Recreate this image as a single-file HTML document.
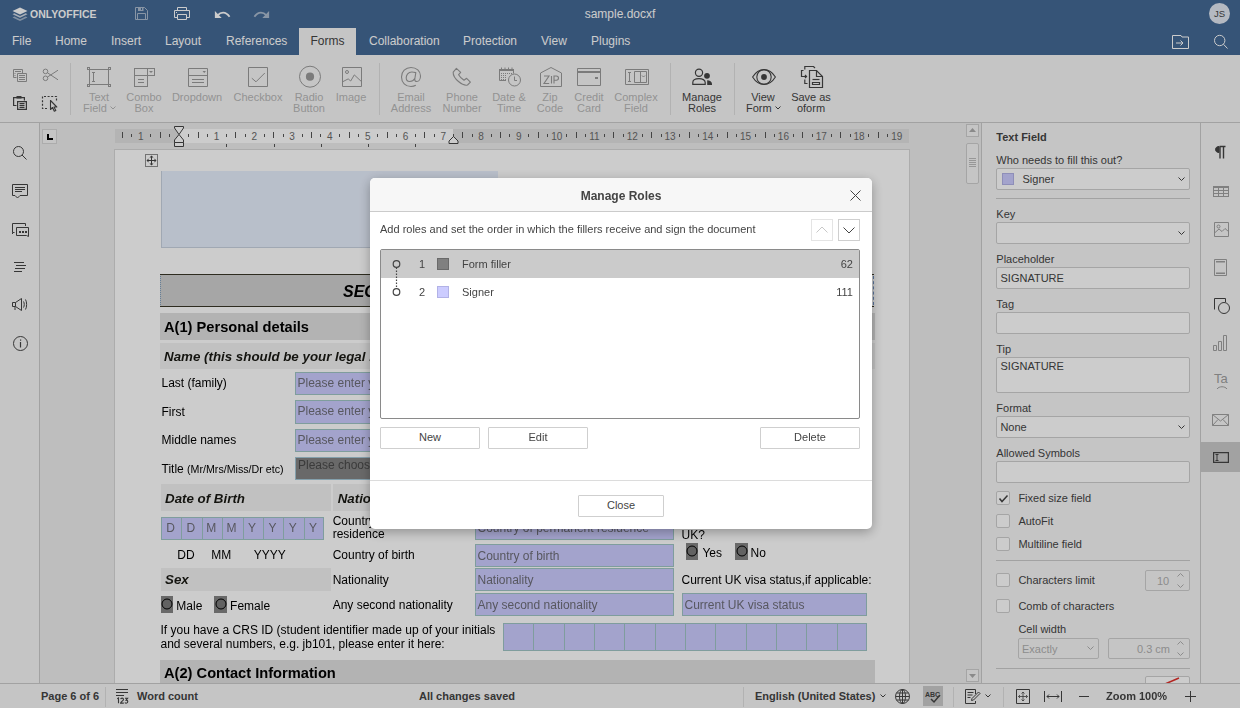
<!DOCTYPE html>
<html><head><meta charset="utf-8">
<style>
*{box-sizing:border-box;margin:0;padding:0}
html,body{width:1240px;height:708px;overflow:hidden;background:#eee;font-family:"Liberation Sans",sans-serif;font-size:11px;color:#444}
.a{position:absolute}
#hdr{left:0;top:0;width:1240px;height:55px;background:#446995;color:#fff}
.tab{position:absolute;top:28px;height:27px;line-height:26px;font-size:12px;color:#fff;white-space:nowrap}
#tb{left:0;top:55px;width:1240px;height:68px;background:#f7f7f7;border-bottom:1px solid #cbcbcb}
.cap{position:absolute;text-align:center;font-size:11px;line-height:11px;white-space:nowrap;color:#b7b7b7}
.cap.en{color:#444}
.sep{position:absolute;top:63px;width:1px;height:52px;background:#dfdfdf}
#lp{left:0;top:123px;width:40px;height:560px;background:#f7f7f7;border-right:1px solid #cbcbcb}
#canvas{left:40px;top:123px;width:941px;height:560px;background:#eeeeee;overflow:hidden}
#rp{left:981px;top:123px;width:219px;height:560px;background:#f7f7f7;border-left:1px solid #cbcbcb;overflow:hidden}
#rb{left:1200px;top:123px;width:40px;height:560px;background:#f7f7f7;border-left:1px solid #cbcbcb}
#sb{left:0;top:683px;width:1240px;height:25px;background:#f7f7f7;border-top:1px solid #cbcbcb}
#mask{left:0;top:0;width:1240px;height:708px;background:rgba(0,0,0,0.2)}
#dlg{left:370px;top:178px;width:502px;height:351px;background:#fff;border-radius:5px;box-shadow:0 3px 12px rgba(0,0,0,0.3);overflow:hidden}
.btn{position:absolute;height:22px;border:1px solid #cfcfcf;border-radius:1px;background:#fff;text-align:center;line-height:19px;font-size:11px;color:#444}
svg{position:absolute;overflow:visible}
.doc{position:absolute;font-size:12px;color:#000;white-space:nowrap;line-height:14px}
.fld{position:absolute;background:#ccccff;border:1px solid #9fc5c5;color:#7f7f7f;font-size:12px;line-height:20px;padding-left:3px;white-space:nowrap;overflow:hidden}
.lbl{position:absolute;font-size:11px;color:#444;white-space:nowrap;line-height:13px}
.inp{position:absolute;border:1px solid #cfcfcf;background:#fff;border-radius:2px}
.chk{position:absolute;width:14px;height:14px;border:1px solid #cfcfcf;background:#fff;border-radius:2px}

</style></head><body>
<div id="hdr" class="a">
<svg style="left:12px;top:7px" width="16" height="15" viewBox="0 0 16 15">
<path d="M8 0.5 L15.5 4 L8 7.5 L0.5 4Z" fill="#fff"/>
<path d="M2.3 6.3 L0.5 7.3 L8 10.8 L15.5 7.3 L13.7 6.3 L8 9 Z" fill="#fff" opacity="0.75"/>
<path d="M2.3 9.6 L0.5 10.6 L8 14.1 L15.5 10.6 L13.7 9.6 L8 12.3 Z" fill="#fff" opacity="0.5"/>
</svg>
<div class="a" style="left:30px;top:6px;font-size:11.5px;font-weight:bold;color:#fff;line-height:16px;transform:scaleX(0.91);transform-origin:0 0">ONLYOFFICE</div>
<!-- save -->
<svg style="left:135px;top:7px" width="13" height="13" viewBox="0 0 13 13" opacity="0.55"><path d="M0.5 0.5H9.5L12.5 3.5V12.5H0.5Z M2.5 12.5V6.5H10.5V12.5" fill="none" stroke="#fff"/><path fill-rule="evenodd" d="M3 0H8.5V4H3Z M6 1H7V3H6Z" fill="#fff"/></svg>
<!-- print -->
<svg style="left:174px;top:7px" width="16" height="13" viewBox="0 0 16 13"><path d="M3.5 3V0.5H12.5V3 M3 10.5H0.5V3.5H15.5V10.5H13 M3.5 7.5H12.5V12.5H3.5Z" fill="none" stroke="#fff"/><rect x="2" y="5" width="1" height="1" fill="#fff"/></svg>
<!-- undo -->
<svg style="left:214px;top:10px" width="17" height="9" viewBox="0 0 17 9"><path d="M0.9 1V8.1H7.7Z" fill="#fff"/><path d="M3.8 5.2C6.5 2 11.5 0.8 15.6 6.7" fill="none" stroke="#fff" stroke-width="1.8"/></svg>
<!-- redo -->
<svg style="left:254px;top:10px" width="17" height="9" viewBox="0 0 17 9" opacity="0.55"><path d="M15.1 1V8.1H8.3Z" fill="#fff"/><path d="M12.2 5.2C9.5 2 4.5 0.8 0.4 6.7" fill="none" stroke="#fff" stroke-width="1.8"/></svg>
<div class="a" style="left:560px;top:6px;width:120px;text-align:center;font-size:12px;line-height:16px;color:#fff">sample.docxf</div>
<div class="a" style="left:1209px;top:3px;width:21px;height:21px;border-radius:50%;background:#e2e8f2;color:#444;font-size:9.5px;line-height:21px;text-align:center">JS</div>
<div class="tab" style="left:12px">File</div>
<div class="tab" style="left:55px">Home</div>
<div class="tab" style="left:111px">Insert</div>
<div class="tab" style="left:165px">Layout</div>
<div class="tab" style="left:226px">References</div>
<div class="tab" style="left:299px;width:57px;background:#f7f7f7;color:#444;text-align:center;top:28px">Forms</div>
<div class="tab" style="left:369px">Collaboration</div>
<div class="tab" style="left:463px">Protection</div>
<div class="tab" style="left:541px">View</div>
<div class="tab" style="left:591px">Plugins</div>
<svg style="left:1172px;top:35px" width="17" height="14" viewBox="0 0 17 14"><path d="M0.5 13.5V0.5H9L10 2H16.5V13.5Z M4 8H11 M8.5 5.5L11 8L8.5 10.5" fill="none" stroke="#fff"/></svg>
<svg style="left:1214px;top:35px" width="15" height="15" viewBox="0 0 15 15"><circle cx="5.7" cy="5.5" r="5.2" fill="none" stroke="#fff"/><path d="M9.5 9.3L13.5 13.5" stroke="#fff"/></svg>
</div>
<div id="tb" class="a"></div>
<div class="a" id="tbc" style="left:0;top:0">
<!-- copy -->
<svg style="left:13px;top:69px" width="15" height="14" viewBox="0 0 15 14"><g stroke="#9a9a9a" fill="none"><path d="M3.5 8.5H0.5V0.5H9.5V4"/><path d="M2 2.5H8"/><path d="M4.5 4.5H13.5V12.5H4.5Z M6 6.5H12 M6 8.5H12 M6 10.5H12"/></g><rect x="1.5" y="4" width="1" height="1" fill="#9a9a9a"/><rect x="1.5" y="6" width="1" height="1" fill="#9a9a9a"/></svg>
<!-- cut -->
<svg style="left:42px;top:68px" width="17" height="14" viewBox="0 0 17 14"><g stroke="#9a9a9a" fill="none"><circle cx="3.5" cy="3.4" r="2.3"/><circle cx="3.5" cy="10.3" r="2.3"/><path d="M5.5 4.8L16 11.8 M5.5 9L16 2.2"/></g></svg>
<!-- paste -->
<svg style="left:13px;top:96px" width="15" height="15" viewBox="0 0 15 15"><g stroke="#444" fill="none" stroke-width="1.2"><path d="M3.5 9.5H0.6V1.6H11.4V4.5"/><path d="M4.6 5.6H13.4V13.4H4.6Z M6.5 7.6H11.5 M6.5 9.5H11.5 M6.5 11.4H11.5"/></g><rect x="3.5" y="0" width="5" height="2.5" fill="#444"/></svg>
<!-- select all -->
<svg style="left:42px;top:96px" width="16" height="16" viewBox="0 0 16 16"><path d="M5 12.5H0.5V0.5H14.5V6" stroke="#444" fill="none" stroke-width="1.2" stroke-dasharray="2 1.6"/><path d="M8.5 4.5V13.5L10.5 11.5L12.3 15.3L13.8 14.6L12 11H14.8Z" stroke="#444" fill="none" stroke-width="1.1" stroke-linejoin="round"/></svg>
<div class="sep" style="left:70px"></div>
<!-- text field -->
<svg style="left:87px;top:67px" width="24" height="20" viewBox="0 0 24 20"><g stroke="#9a9a9a" fill="none"><path d="M2.5 3V17 M21.5 3V17 M3 2.5H21 M3 17.5H21"/><rect x="0.5" y="0.5" width="2" height="2"/><rect x="21.5" y="0.5" width="2" height="2"/><rect x="0.5" y="17.5" width="2" height="2"/><rect x="21.5" y="17.5" width="2" height="2"/><path d="M6.5 5.5V14.5 M5 5.5H8 M5 14.5H8"/></g></svg>
<!-- combo box -->
<svg style="left:134px;top:68px" width="21" height="19" viewBox="0 0 21 19"><path d="M0.5 0.5H13.5V18.5H0.5Z M0.5 7.5H20.5V0.5H13.5 M4 11.5H10 M4 14.5H10" stroke="#9a9a9a" fill="none" shape-rendering="crispEdges"/><path d="M15 3H19L17 5Z" fill="#9a9a9a"/></svg>
<!-- dropdown -->
<svg style="left:188px;top:68px" width="20" height="19" viewBox="0 0 20 19"><path d="M0.5 0.5H19.5V18.5H0.5Z M0.5 7.5H19.5 M4 11.5H16 M4 14.5H16" stroke="#9a9a9a" fill="none"/><path d="M14.5 3H18L16.25 5Z" fill="#9a9a9a"/></svg>
<!-- checkbox -->
<svg style="left:248px;top:67px" width="20" height="20" viewBox="0 0 20 20"><path d="M0.5 0.5H19.5V19.5H0.5Z" stroke="#9a9a9a" fill="none"/><path d="M3.8 11.2L8 14.8L16.8 6" stroke="#9a9a9a" fill="none"/></svg>
<!-- radio -->
<svg style="left:299px;top:66px" width="22" height="22" viewBox="0 0 22 22"><circle cx="11" cy="10.7" r="10.5" stroke="#9a9a9a" fill="none"/><circle cx="11" cy="10.7" r="4.1" fill="#9a9a9a"/></svg>
<!-- image -->
<svg style="left:342px;top:67px" width="20" height="20" viewBox="0 0 20 20"><path d="M0.5 0.5H19.5V19.5H0.5Z" stroke="#9a9a9a" fill="none"/><circle cx="5" cy="5" r="1.5" stroke="#9a9a9a" fill="none"/><path d="M0.6 14.8L6.2 11.9L8.7 14L12.3 7.9L19.7 14.8" stroke="#9a9a9a" fill="none"/></svg>
<div class="sep" style="left:379px"></div>
<!-- email -->
<svg style="left:401px;top:67px" width="21" height="20" viewBox="0 0 21 20"><path d="M14.8 18.3C13.5 19.1 11.8 19.5 10 19.5C4.5 19.5 0.5 15.5 0.5 10C0.5 4.5 4.5 0.5 10 0.5C15.5 0.5 19.5 4.2 19.5 9C19.5 12.3 17.8 14.5 15.8 14.5C14.3 14.5 13.6 13.5 13.8 12L14.8 5.6C13.5 5.2 12 5 10.8 5C7.2 5 5.2 8 5.2 10.8C5.2 13 6.6 14.5 8.6 14.5C10.8 14.5 13 13 13.8 11.6" stroke="#9a9a9a" stroke-width="1.1" fill="none" stroke-linejoin="round"/></svg>
<!-- phone -->
<svg style="left:450px;top:66px" width="24" height="22" viewBox="0 0 24 22"><path d="M6.4 2.4L10.7 6.3L8.6 8.7C9.8 10.8 11.8 12.8 14 14.2L16.6 12.3L20.4 16.1L17.5 19C15.5 19.6 12 18.4 8.5 15.5C5 12.5 3 9 3.2 6.2Z" stroke="#9a9a9a" stroke-width="1.1" stroke-linejoin="round" fill="none"/></svg>
<!-- date -->
<svg style="left:498px;top:67px" width="24" height="21" viewBox="0 0 24 21"><path d="M1.5 13.5V2.5H15.5V6.5 M1.5 13.5H8" stroke="#9a9a9a" fill="none"/><rect x="1" y="2" width="15" height="2" fill="#9a9a9a"/><path d="M3.5 0.5V3 M7 0.5V3 M10.5 0.5V3 M14 0.5V3" stroke="#9a9a9a"/><path d="M3 6h1v1h-1zM5 6h1v1h-1zM7 6h1v1h-1zM9 6h1v1h-1zM11 6h1v1h-1zM13 6h1v1h-1zM3 8h1v1h-1zM5 8h1v1h-1zM7 8h1v1h-1zM3 10h1v1h-1zM5 10h1v1h-1zM7 10h1v1h-1zM3 12h1v1h-1zM5 12h1v1h-1zM7 12h1v1h-1z" fill="#9a9a9a"/><circle cx="16.5" cy="13" r="6" stroke="#9a9a9a" fill="#f7f7f7"/><path d="M16.5 9.5V13.5H19" stroke="#9a9a9a" fill="none"/></svg>
<!-- zip -->
<svg style="left:540px;top:67px" width="22" height="20" viewBox="0 0 22 20"><path d="M0.5 19.5V6L11 0.5L21.5 6V19.5Z" stroke="#9a9a9a" fill="none"/><path d="M4 9H9L4 16.5H9.2 M11.5 9V16.5 M14 16.5V9H16.3C17.8 9 18.5 10 18.5 11.1C18.5 12.2 17.8 13.2 16.3 13.2H14" stroke="#9a9a9a" stroke-width="1.1" fill="none"/></svg>
<!-- credit card -->
<svg style="left:577px;top:68px" width="24" height="18" viewBox="0 0 24 18"><path d="M0.5 0.5H23.5V17.5H0.5Z" stroke="#9a9a9a" fill="none"/><rect x="1" y="3" width="22" height="2" fill="#9a9a9a"/><rect x="18" y="9" width="3" height="2" fill="#9a9a9a"/></svg>
<!-- complex field -->
<svg style="left:625px;top:69px" width="24" height="16" viewBox="0 0 24 16"><path d="M0.5 0.5H23.5V15.5H0.5Z M9.5 2.5V13.5H21.5V2.5Z M15.5 2.5V13.5 M3 3.5H6 M3 12.5H6 M4.5 3.5V12.5" stroke="#9a9a9a" fill="none"/><path d="M17 6.5L18.5 8L20 6.5" stroke="#9a9a9a" fill="none"/></svg>
<div class="sep" style="left:670px"></div>
<!-- manage roles -->
<svg style="left:690px;top:67px" width="23" height="19" viewBox="0 0 23 19"><circle cx="9" cy="5.8" r="3.6" stroke="#444" stroke-width="1.2" fill="none"/><path d="M2.8 17.4V15.5C2.8 13 5.5 11.6 9 11.6C12.5 11.6 15.2 13 15.2 15.5V17.4Z" stroke="#444" stroke-width="1.2" fill="none"/><circle cx="17" cy="8.8" r="2.9" fill="#444"/><path d="M17.2 18V13.2C19.7 13.2 22 14.5 22 17V18Z" fill="#444"/></svg>
<div class="sep" style="left:734px"></div>
<!-- view form -->
<svg style="left:752px;top:69px" width="24" height="16" viewBox="0 0 24 16"><path d="M0.6 8C4 2.5 8 0.6 12 0.6C16 0.6 20 2.5 23.4 8C20 13.5 16 15.4 12 15.4C8 15.4 4 13.5 0.6 8Z" stroke="#444" stroke-width="1.1" fill="none"/><circle cx="12" cy="8" r="7.2" stroke="#444" stroke-width="1.1" fill="none"/><circle cx="12" cy="8" r="2.9" fill="#444"/></svg>
<!-- save as oform -->
<svg style="left:800px;top:65px" width="24" height="24" viewBox="0 0 24 24"><g stroke="#444" stroke-width="1.2" fill="none"><path d="M4.8 4.5V1.5H13.5L15 3"/><path d="M3.5 5.5H1.5V11.5H6.5"/><path d="M5 10L6.5 11.5L5 13"/><path d="M4.8 14.5V18.5H7.5"/><path d="M9.5 5.5H16.5L22.5 11.5V22.5H9.5Z"/><path d="M16.5 5.5V11.5H22.5"/><path d="M12.5 14.5H19.5"/><path d="M12.5 17.5H19.5V19.5H12.5Z"/></g></svg>
<div class="cap" style="left:59px;width:80px;top:92px">Text</div><div class="cap" style="left:83px;top:103px">Field</div><svg style="left:110px;top:106px" width="6" height="4" viewBox="0 0 6 4"><path d="M0.5 0.5L3 3L5.5 0.5" stroke="#b7b7b7" fill="none"/></svg><div class="cap" style="left:104px;width:80px;top:92px">Combo</div><div class="cap" style="left:104px;width:80px;top:103px">Box</div><div class="cap" style="left:157px;width:80px;top:92px">Dropdown</div><div class="cap" style="left:218px;width:80px;top:92px">Checkbox</div><div class="cap" style="left:269px;width:80px;top:92px">Radio</div><div class="cap" style="left:269px;width:80px;top:103px">Button</div><div class="cap" style="left:311px;width:80px;top:92px">Image</div><div class="cap" style="left:371px;width:80px;top:92px">Email</div><div class="cap" style="left:371px;width:80px;top:103px">Address</div><div class="cap" style="left:422px;width:80px;top:92px">Phone</div><div class="cap" style="left:422px;width:80px;top:103px">Number</div><div class="cap" style="left:469px;width:80px;top:92px">Date &amp;</div><div class="cap" style="left:469px;width:80px;top:103px">Time</div><div class="cap" style="left:510px;width:80px;top:92px">Zip</div><div class="cap" style="left:510px;width:80px;top:103px">Code</div><div class="cap" style="left:549px;width:80px;top:92px">Credit</div><div class="cap" style="left:549px;width:80px;top:103px">Card</div><div class="cap" style="left:596px;width:80px;top:92px">Complex</div><div class="cap" style="left:596px;width:80px;top:103px">Field</div><div class="cap en" style="left:662px;width:80px;top:92px">Manage</div><div class="cap en" style="left:662px;width:80px;top:103px">Roles</div><div class="cap en" style="left:723px;width:80px;top:92px">View</div><div class="cap en" style="left:746px;top:103px">Form</div><svg style="left:775px;top:106px" width="6" height="4" viewBox="0 0 6 4"><path d="M0.5 0.5L3 3L5.5 0.5" stroke="#444" fill="none"/></svg><div class="cap en" style="left:771px;width:80px;top:92px">Save as</div><div class="cap en" style="left:771px;width:80px;top:103px">oform</div></div>
<div id="lp" class="a"></div>
<svg style="left:13px;top:146px" width="15" height="15" viewBox="0 0 15 15"><circle cx="5.5" cy="5.5" r="5" fill="none" stroke="#444"/><path d="M9 9L13.5 13.5" stroke="#444"/></svg>
<svg style="left:12px;top:184px" width="17" height="15" viewBox="0 0 17 15"><path d="M0.5 0.5H15.5V11.5H8L5.5 14L3 11.5H0.5Z" fill="none" stroke="#444"/><path d="M3 3.5H13 M3 5.5H13 M3 7.5H10" stroke="#444"/></svg>
<svg style="left:12px;top:223px" width="17" height="15" viewBox="0 0 17 15"><path d="M2.5 9.5H0.5V0.5H13.5V3" fill="none" stroke="#444"/><path d="M0.5 9.5V11" stroke="#444"/><path d="M4.5 4.5H16.5V13.5L14.5 12.5H4.5Z" fill="none" stroke="#444"/><path d="M7 8h2v2h-2zM10 8h2v2h-2zM13 8h2v2h-2z" fill="#444"/></svg>
<svg style="left:13px;top:261px" width="14" height="12" viewBox="0 0 14 12"><path d="M1 1.5H11 M3 4.5H13 M2 7.5H12 M1 10.5H9" stroke="#444"/></svg>
<svg style="left:12px;top:298px" width="16" height="13" viewBox="0 0 16 13"><path d="M0.5 4.5H3.5L9.5 0.5V12.5L3.5 8.5H0.5Z M3.5 4.5V8.5 M3 8.5V12" fill="none" stroke="#444"/><path d="M11.5 3.5C12.5 5 12.5 8 11.5 9.5 M13.5 1.5C15 4 15 9 13.5 11.5" fill="none" stroke="#444"/></svg>
<svg style="left:13px;top:336px" width="15" height="15" viewBox="0 0 15 15"><circle cx="7.5" cy="7.5" r="7" fill="none" stroke="#444"/><path d="M7.5 6V11.5" stroke="#444" stroke-width="1.2"/><rect x="7" y="3.5" width="1.2" height="1.2" fill="#444"/></svg>
<div id="canvas" class="a"></div>
<div class="a" style="left:42px;top:129px;width:15px;height:15px;border:1px solid #d8d8d8;background:#f7f7f7"></div>
<svg style="left:47px;top:134px" width="6" height="6" viewBox="0 0 6 6"><path d="M0 0H2V4H6V6H0Z" fill="#000"/></svg>
<div class="a" style="left:115px;top:129px;width:794px;height:14px;background:#e2e2e2"></div>
<div class="a" style="left:179px;top:129px;width:274px;height:14px;background:#ffffff"></div>
<svg style="left:0;top:0" width="1240" height="200" viewBox="0 0 1240 200"><path d="M122.5 132V138" stroke="#555"/><path d="M131.5 134V137" stroke="#555"/><text x="140.9" y="140" text-anchor="middle" font-family="Liberation Sans" font-size="10" fill="#6a6a6a">1</text><path d="M150.5 134V137" stroke="#555"/><path d="M160.5 132V138" stroke="#555"/><path d="M169.5 134V137" stroke="#555"/><path d="M188.5 134V137" stroke="#555"/><path d="M198.5 132V138" stroke="#555"/><path d="M207.5 134V137" stroke="#555"/><text x="216.5" y="140" text-anchor="middle" font-family="Liberation Sans" font-size="10" fill="#6a6a6a">1</text><path d="M226.5 134V137" stroke="#555"/><path d="M235.5 132V138" stroke="#555"/><path d="M245.5 134V137" stroke="#555"/><text x="254.3" y="140" text-anchor="middle" font-family="Liberation Sans" font-size="10" fill="#6a6a6a">2</text><path d="M264.5 134V137" stroke="#555"/><path d="M273.5 132V138" stroke="#555"/><path d="M283.5 134V137" stroke="#555"/><text x="292.1" y="140" text-anchor="middle" font-family="Liberation Sans" font-size="10" fill="#6a6a6a">3</text><path d="M302.5 134V137" stroke="#555"/><path d="M311.5 132V138" stroke="#555"/><path d="M320.5 134V137" stroke="#555"/><text x="329.9" y="140" text-anchor="middle" font-family="Liberation Sans" font-size="10" fill="#6a6a6a">4</text><path d="M339.5 134V137" stroke="#555"/><path d="M349.5 132V138" stroke="#555"/><path d="M358.5 134V137" stroke="#555"/><text x="367.7" y="140" text-anchor="middle" font-family="Liberation Sans" font-size="10" fill="#6a6a6a">5</text><path d="M377.5 134V137" stroke="#555"/><path d="M387.5 132V138" stroke="#555"/><path d="M396.5 134V137" stroke="#555"/><text x="405.5" y="140" text-anchor="middle" font-family="Liberation Sans" font-size="10" fill="#6a6a6a">6</text><path d="M415.5 134V137" stroke="#555"/><path d="M424.5 132V138" stroke="#555"/><path d="M434.5 134V137" stroke="#555"/><text x="443.3" y="140" text-anchor="middle" font-family="Liberation Sans" font-size="10" fill="#6a6a6a">7</text><path d="M453.5 134V137" stroke="#555"/><path d="M462.5 132V138" stroke="#555"/><path d="M472.5 134V137" stroke="#555"/><text x="481.1" y="140" text-anchor="middle" font-family="Liberation Sans" font-size="10" fill="#6a6a6a">8</text><path d="M491.5 134V137" stroke="#555"/><path d="M500.5 132V138" stroke="#555"/><path d="M509.5 134V137" stroke="#555"/><text x="518.9" y="140" text-anchor="middle" font-family="Liberation Sans" font-size="10" fill="#6a6a6a">9</text><path d="M528.5 134V137" stroke="#555"/><path d="M538.5 132V138" stroke="#555"/><path d="M547.5 134V137" stroke="#555"/><text x="556.7" y="140" text-anchor="middle" font-family="Liberation Sans" font-size="10" fill="#6a6a6a">10</text><path d="M566.5 134V137" stroke="#555"/><path d="M576.5 132V138" stroke="#555"/><path d="M585.5 134V137" stroke="#555"/><text x="594.4" y="140" text-anchor="middle" font-family="Liberation Sans" font-size="10" fill="#6a6a6a">11</text><path d="M604.5 134V137" stroke="#555"/><path d="M613.5 132V138" stroke="#555"/><path d="M623.5 134V137" stroke="#555"/><text x="632.2" y="140" text-anchor="middle" font-family="Liberation Sans" font-size="10" fill="#6a6a6a">12</text><path d="M642.5 134V137" stroke="#555"/><path d="M651.5 132V138" stroke="#555"/><path d="M661.5 134V137" stroke="#555"/><text x="670.0" y="140" text-anchor="middle" font-family="Liberation Sans" font-size="10" fill="#6a6a6a">13</text><path d="M679.5 134V137" stroke="#555"/><path d="M689.5 132V138" stroke="#555"/><path d="M698.5 134V137" stroke="#555"/><text x="707.8" y="140" text-anchor="middle" font-family="Liberation Sans" font-size="10" fill="#6a6a6a">14</text><path d="M717.5 134V137" stroke="#555"/><path d="M727.5 132V138" stroke="#555"/><path d="M736.5 134V137" stroke="#555"/><text x="745.6" y="140" text-anchor="middle" font-family="Liberation Sans" font-size="10" fill="#6a6a6a">15</text><path d="M755.5 134V137" stroke="#555"/><path d="M765.5 132V138" stroke="#555"/><path d="M774.5 134V137" stroke="#555"/><text x="783.4" y="140" text-anchor="middle" font-family="Liberation Sans" font-size="10" fill="#6a6a6a">16</text><path d="M793.5 134V137" stroke="#555"/><path d="M802.5 132V138" stroke="#555"/><path d="M812.5 134V137" stroke="#555"/><text x="821.2" y="140" text-anchor="middle" font-family="Liberation Sans" font-size="10" fill="#6a6a6a">17</text><path d="M831.5 134V137" stroke="#555"/><path d="M840.5 132V138" stroke="#555"/><path d="M850.5 134V137" stroke="#555"/><text x="859.0" y="140" text-anchor="middle" font-family="Liberation Sans" font-size="10" fill="#6a6a6a">18</text><path d="M868.5 134V137" stroke="#555"/><path d="M878.5 132V138" stroke="#555"/><path d="M887.5 134V137" stroke="#555"/><text x="896.8" y="140" text-anchor="middle" font-family="Liberation Sans" font-size="10" fill="#6a6a6a">19</text><path d="M226.5 144V147" stroke="#555"/><path d="M274.5 144V147" stroke="#555"/><path d="M321.5 144V147" stroke="#555"/><path d="M368.5 144V147" stroke="#555"/><path d="M415.5 144V147" stroke="#555"/></svg>
<div class="a" style="left:114px;top:149px;width:796px;height:560px;background:#fff;border-left:1px solid #d8d8d8;border-right:1px solid #d8d8d8;border-top:1px solid #d8d8d8"></div>
<svg style="left:174px;top:126px" width="11" height="22" viewBox="0 0 11 22"><path d="M0.5 0.5H9.5V2L5 8.5L0.5 2Z" fill="#fff" stroke="#444"/><path d="M5 8.5L9.5 14V16.5H0.5V14Z" fill="#fff" stroke="#444"/><path d="M0.5 16.5H9.5V20.5H0.5Z" fill="#fff" stroke="#444"/></svg>
<svg style="left:448px;top:136px" width="11" height="8" viewBox="0 0 11 8"><path d="M5.5 0.5L10 5V7.5H1V5Z" fill="#fff" stroke="#444"/></svg>
<div class="a" style="left:966px;top:124px;width:13px;height:13px;border:1px solid #cfcfcf;background:#f7f7f7"></div>
<svg style="left:969px;top:128px" width="7" height="4" viewBox="0 0 7 4"><path d="M0 4L3.5 0L7 4Z" fill="#adadad"/></svg>
<div class="a" style="left:966px;top:143px;width:13px;height:41px;border:1px solid #cfcfcf;background:#f7f7f7;border-radius:2px"></div>
<svg style="left:969px;top:158px" width="7" height="10" viewBox="0 0 7 10"><path d="M0 0.5H7M0 2.5H7M0 4.5H7M0 6.5H7M0 8.5H7" stroke="#bdbdbd"/></svg>
<div class="a" style="left:966px;top:669px;width:13px;height:13px;border:1px solid #cfcfcf;background:#f7f7f7"></div>
<svg style="left:969px;top:674px" width="7" height="4" viewBox="0 0 7 4"><path d="M0 0L3.5 4L7 0Z" fill="#adadad"/></svg>
<div class="a" style="left:145px;top:154px;width:13px;height:13px;border:1px solid #8f8f8f;background:#fff"></div>
<svg style="left:146px;top:155px" width="11" height="11" viewBox="0 0 11 11"><path d="M5.5 1.5V9.5 M1.5 5.5H9.5" stroke="#444"/><path d="M5.5 0.5L7.5 2.5H3.5Z M5.5 10.5L7.5 8.5H3.5Z M0.5 5.5L2.5 3.5V7.5Z M10.5 5.5L8.5 3.5V7.5Z" fill="#444"/></svg>
<!--DOC-->
<div id="docwrap" class="a" style="left:0;top:0;width:1240px;height:708px;will-change:transform"><div class="a" style="left:161px;top:171px;width:337px;height:77px;background:#e7effd;border-left:1px solid #c9d2e0;border-bottom:1px solid #c9d2e0"></div>
<div class="a" style="left:160px;top:274px;width:714px;height:33px;background:#d0d0d0;border-top:1px solid #3a3828;border-bottom:1px solid #3a3828"></div>
<div class="a" style="left:872px;top:275px;width:2px;height:31px;background:#f7f7f7"></div>
<div class="a" style="left:873px;top:276px;width:0;height:29px;border-left:1px dashed #6f8fbf"></div>
<div class="a" style="left:160px;top:276px;width:0;height:29px;border-left:1px dotted #7f9fbf"></div>
<div class="doc" style="left:343px;top:282.51px;font-size:16px;line-height:18.4px;color:#000;font-weight:bold;font-style:italic">SECTION A: PERSONAL INFORMATION</div>
<div class="a" style="left:160px;top:313px;width:715px;height:27px;background:#e0e0e0"></div>
<div class="doc" style="left:164px;top:318.72px;font-size:14.67px;line-height:16.87px;color:#000;font-weight:bold">A(1) Personal details</div>
<div class="a" style="left:160px;top:343px;width:715px;height:26px;background:#f2f2f2"></div>
<div class="doc" style="left:164px;top:348.93px;font-size:13.33px;line-height:15.33px;color:#000;font-weight:bold;font-style:italic;color:#1a1a14">Name (this should be your legal name)</div>
<div class="doc" style="left:161.5px;top:376.63px;font-size:12px;line-height:13.8px;color:#000;">Last (family)</div>
<div class="doc" style="left:161.5px;top:405.73px;font-size:12px;line-height:13.8px;color:#000;">First</div>
<div class="doc" style="left:161.5px;top:433.93px;font-size:12px;line-height:13.8px;color:#000;">Middle names</div>
<div class="doc" style="left:161.5px;top:462.3px;font-size:12px;line-height:14px">Title <span style="font-size:10.67px">(Mr/Mrs/Miss/Dr etc)</span></div>
<div class="a" style="left:295px;top:372px;width:567px;height:23px;background:#ccccff;border:1px solid #9fc5c5"></div>
<div class="doc" style="left:297.5px;top:376.93px;font-size:12px;line-height:13.8px;color:#6e6e78;">Please enter your last name</div>
<div class="a" style="left:295px;top:400px;width:567px;height:24px;background:#ccccff;border:1px solid #9fc5c5"></div>
<div class="doc" style="left:297.5px;top:405.43px;font-size:12px;line-height:13.8px;color:#6e6e78;">Please enter your first name</div>
<div class="a" style="left:295px;top:429px;width:567px;height:23px;background:#ccccff;border:1px solid #9fc5c5"></div>
<div class="doc" style="left:297.5px;top:433.93px;font-size:12px;line-height:13.8px;color:#6e6e78;">Please enter your middle names</div>
<div class="a" style="left:295px;top:457px;width:567px;height:23px;background:#848484;border:1px solid #a6c8d8"></div>
<div class="doc" style="left:298px;top:459.13px;font-size:12px;line-height:13.8px;color:#4a4a4a;">Please choose</div>
<div class="a" style="left:161px;top:484px;width:170px;height:27px;background:#f2f2f2"></div>
<div class="doc" style="left:165px;top:490.93px;font-size:13.33px;line-height:15.33px;color:#000;font-weight:bold;font-style:italic;color:#1a1a14">Date of Birth</div>
<div class="a" style="left:333px;top:484px;width:529px;height:27px;background:#f2f2f2"></div>
<div class="doc" style="left:337.7px;top:490.53px;font-size:13.33px;line-height:15.33px;color:#000;font-weight:bold;font-style:italic;color:#1a1a14">Nationality</div>
<div class="a" style="left:161px;top:517px;width:163px;height:23px;background:#ccccff;border:1px solid #9fc5c5"></div>
<div class="doc" style="left:160.3px;top:521px;width:20.4px;text-align:center;color:#6e6e78">D</div>
<div class="a" style="left:181.4px;top:518px;width:1px;height:21px;background:#9fc5c5"></div>
<div class="doc" style="left:180.7px;top:521px;width:20.4px;text-align:center;color:#6e6e78">D</div>
<div class="a" style="left:201.8px;top:518px;width:1px;height:21px;background:#9fc5c5"></div>
<div class="doc" style="left:201.1px;top:521px;width:20.4px;text-align:center;color:#6e6e78">M</div>
<div class="a" style="left:222.1px;top:518px;width:1px;height:21px;background:#9fc5c5"></div>
<div class="doc" style="left:221.4px;top:521px;width:20.4px;text-align:center;color:#6e6e78">M</div>
<div class="a" style="left:242.5px;top:518px;width:1px;height:21px;background:#9fc5c5"></div>
<div class="doc" style="left:241.8px;top:521px;width:20.4px;text-align:center;color:#6e6e78">Y</div>
<div class="a" style="left:262.9px;top:518px;width:1px;height:21px;background:#9fc5c5"></div>
<div class="doc" style="left:262.2px;top:521px;width:20.4px;text-align:center;color:#6e6e78">Y</div>
<div class="a" style="left:283.2px;top:518px;width:1px;height:21px;background:#9fc5c5"></div>
<div class="doc" style="left:282.6px;top:521px;width:20.4px;text-align:center;color:#6e6e78">Y</div>
<div class="a" style="left:303.6px;top:518px;width:1px;height:21px;background:#9fc5c5"></div>
<div class="doc" style="left:302.9px;top:521px;width:20.4px;text-align:center;color:#6e6e78">Y</div>
<div class="doc" style="left:177.3px;top:548.83px;font-size:12px;line-height:13.8px;color:#000;">DD</div>
<div class="doc" style="left:211.3px;top:548.83px;font-size:12px;line-height:13.8px;color:#000;">MM</div>
<div class="doc" style="left:253.8px;top:548.83px;font-size:12px;line-height:13.8px;color:#000;">YYYY</div>
<div class="a" style="left:161px;top:568px;width:170px;height:23px;background:#f2f2f2"></div>
<div class="doc" style="left:165px;top:571.93px;font-size:13.33px;line-height:15.33px;color:#000;font-weight:bold;font-style:italic;color:#1a1a14">Sex</div>
<div class="a" style="left:161px;top:596px;width:12px;height:17px;background:#848484"></div>
<svg style="left:161.0px;top:597.5px" width="12" height="12" viewBox="0 0 12 12"><circle cx="6" cy="6" r="5" fill="#7b7b7b" stroke="#000" stroke-width="1"/></svg>
<div class="doc" style="left:176.3px;top:600.13px;font-size:12px;line-height:13.8px;color:#000;">Male</div>
<div class="a" style="left:214px;top:596px;width:13px;height:17px;background:#848484"></div>
<svg style="left:214.5px;top:597.5px" width="12" height="12" viewBox="0 0 12 12"><circle cx="6" cy="6" r="5" fill="#7b7b7b" stroke="#000" stroke-width="1"/></svg>
<div class="doc" style="left:230.1px;top:600.13px;font-size:12px;line-height:13.8px;color:#000;">Female</div>
<div class="doc" style="left:332.7px;top:514.63px;font-size:12px;line-height:13.8px;color:#000;">Country of permanent</div>
<div class="doc" style="left:332.7px;top:528.43px;font-size:12px;line-height:13.8px;color:#000;">residence</div>
<div class="doc" style="left:332.7px;top:548.53px;font-size:12px;line-height:13.8px;color:#000;">Country of birth</div>
<div class="doc" style="left:332.7px;top:573.93px;font-size:12px;line-height:13.8px;color:#000;">Nationality</div>
<div class="doc" style="left:332.7px;top:598.63px;font-size:12px;line-height:13.8px;color:#000;">Any second nationality</div>
<div class="a" style="left:475px;top:516px;width:199px;height:24px;background:#ccccff;border:1px solid #9fc5c5"></div>
<div class="doc" style="left:477.5px;top:522.43px;font-size:12px;line-height:13.8px;color:#6e6e78;">Country of permanent residence</div>
<div class="a" style="left:475px;top:544px;width:199px;height:23px;background:#ccccff;border:1px solid #9fc5c5"></div>
<div class="doc" style="left:477.5px;top:549.93px;font-size:12px;line-height:13.8px;color:#6e6e78;">Country of birth</div>
<div class="a" style="left:475px;top:568px;width:199px;height:23px;background:#ccccff;border:1px solid #9fc5c5"></div>
<div class="doc" style="left:477.5px;top:573.93px;font-size:12px;line-height:13.8px;color:#6e6e78;">Nationality</div>
<div class="a" style="left:475px;top:593px;width:199px;height:23px;background:#ccccff;border:1px solid #9fc5c5"></div>
<div class="doc" style="left:477.5px;top:598.93px;font-size:12px;line-height:13.8px;color:#6e6e78;">Any second nationality</div>
<div class="doc" style="left:681.5px;top:528.83px;font-size:12px;line-height:13.8px;color:#000;">UK?</div>
<div class="a" style="left:686px;top:543px;width:12px;height:17px;background:#848484"></div>
<svg style="left:686.0px;top:544.5px" width="12" height="12" viewBox="0 0 12 12"><circle cx="6" cy="6" r="5" fill="#7b7b7b" stroke="#000" stroke-width="1"/></svg>
<div class="doc" style="left:702.4px;top:546.83px;font-size:12px;line-height:13.8px;color:#000;">Yes</div>
<div class="a" style="left:735px;top:543px;width:13px;height:17px;background:#848484"></div>
<svg style="left:735.5px;top:544.5px" width="12" height="12" viewBox="0 0 12 12"><circle cx="6" cy="6" r="5" fill="#7b7b7b" stroke="#000" stroke-width="1"/></svg>
<div class="doc" style="left:750.5px;top:546.83px;font-size:12px;line-height:13.8px;color:#000;">No</div>
<div class="doc" style="left:681.5px;top:573.73px;font-size:12px;line-height:13.8px;color:#000;">Current UK visa status,if applicable:</div>
<div class="a" style="left:682px;top:593px;width:185px;height:23px;background:#ccccff;border:1px solid #9fc5c5"></div>
<div class="doc" style="left:684.5px;top:598.93px;font-size:12px;line-height:13.8px;color:#6e6e78;">Current UK visa status</div>
<div class="doc" style="left:160.5px;top:624.23px;font-size:12px;line-height:13.8px;color:#000;">If you have a CRS ID (student identifier made up of your initials</div>
<div class="doc" style="left:160.5px;top:637.83px;font-size:12px;line-height:13.8px;color:#000;">and several numbers, e.g. jb101, please enter it here:</div>
<div class="a" style="left:503px;top:623px;width:364px;height:28px;background:#ccccff;border:1px solid #9fc5c5"></div>
<div class="a" style="left:533.3px;top:624px;width:1px;height:26px;background:#9fc5c5"></div>
<div class="a" style="left:563.7px;top:624px;width:1px;height:26px;background:#9fc5c5"></div>
<div class="a" style="left:594.0px;top:624px;width:1px;height:26px;background:#9fc5c5"></div>
<div class="a" style="left:624.3px;top:624px;width:1px;height:26px;background:#9fc5c5"></div>
<div class="a" style="left:654.7px;top:624px;width:1px;height:26px;background:#9fc5c5"></div>
<div class="a" style="left:685.0px;top:624px;width:1px;height:26px;background:#9fc5c5"></div>
<div class="a" style="left:715.3px;top:624px;width:1px;height:26px;background:#9fc5c5"></div>
<div class="a" style="left:745.7px;top:624px;width:1px;height:26px;background:#9fc5c5"></div>
<div class="a" style="left:776.0px;top:624px;width:1px;height:26px;background:#9fc5c5"></div>
<div class="a" style="left:806.3px;top:624px;width:1px;height:26px;background:#9fc5c5"></div>
<div class="a" style="left:836.7px;top:624px;width:1px;height:26px;background:#9fc5c5"></div>
<div class="a" style="left:160px;top:660px;width:715px;height:40px;background:#e0e0e0"></div>
<div class="doc" style="left:164px;top:665.22px;font-size:14.67px;line-height:16.87px;color:#000;font-weight:bold">A(2) Contact Information</div></div>
<div id="rp" class="a"></div>
<div id="rb" class="a"></div>
<div class="lbl" style="left:996.3px;top:130.86px;font-weight:bold">Text Field</div>
<div class="lbl" style="left:996.3px;top:153.76px;">Who needs to fill this out?</div>
<div class="inp" style="left:996px;top:168px;width:194px;height:22px"></div>
<div class="a" style="left:1002px;top:173px;width:12px;height:12px;background:#ccccff;border:1px solid #b2b2e6"></div>
<div class="lbl" style="left:1022.5px;top:172.6px;">Signer</div>
<svg style="left:1178px;top:177px" width="7" height="4" viewBox="0 0 7 4"><path d="M0.5 0.5L3.5 3.5L6.5 0.5" stroke="#444" fill="none"/></svg>
<div class="a" style="left:996px;top:198px;width:194px;height:1px;background:#cbcbcb"></div>
<div class="lbl" style="left:996.3px;top:208.06px;">Key</div>
<div class="inp" style="left:996px;top:222px;width:194px;height:22px"></div>
<svg style="left:1178px;top:231px" width="7" height="4" viewBox="0 0 7 4"><path d="M0.5 0.5L3.5 3.5L6.5 0.5" stroke="#444" fill="none"/></svg>
<div class="lbl" style="left:996.3px;top:253.06px;">Placeholder</div>
<div class="inp" style="left:996px;top:267px;width:194px;height:22px"></div>
<div class="lbl" style="left:1000.5px;top:271.7px;">SIGNATURE</div>
<div class="lbl" style="left:996.3px;top:297.66px;">Tag</div>
<div class="inp" style="left:996px;top:312px;width:194px;height:22px"></div>
<div class="lbl" style="left:996.3px;top:342.66px;">Tip</div>
<div class="inp" style="left:996px;top:357px;width:194px;height:36px"></div>
<div class="lbl" style="left:1000.5px;top:359.7px;">SIGNATURE</div>
<div class="lbl" style="left:996.3px;top:402.26px;">Format</div>
<div class="inp" style="left:996px;top:416px;width:194px;height:22px"></div>
<div class="lbl" style="left:1000.4px;top:420.8px;">None</div>
<svg style="left:1178px;top:425px" width="7" height="4" viewBox="0 0 7 4"><path d="M0.5 0.5L3.5 3.5L6.5 0.5" stroke="#444" fill="none"/></svg>
<div class="lbl" style="left:996.3px;top:447.16px;">Allowed Symbols</div>
<div class="inp" style="left:996px;top:461px;width:194px;height:22px"></div>
<div class="chk" style="left:996px;top:491px;width:14px;height:14px"></div>
<svg style="left:999px;top:494.5px" width="9" height="8" viewBox="0 0 9 8"><path d="M0.5 3.5L3 6.5L8.5 0.5" stroke="#444" stroke-width="1.5" fill="none"/></svg>
<div class="lbl" style="left:1018.4px;top:492.16px;">Fixed size field</div>
<div class="chk" style="left:996px;top:514px;width:14px;height:14px"></div>
<div class="lbl" style="left:1018.4px;top:515.16px;">AutoFit</div>
<div class="chk" style="left:996px;top:537px;width:14px;height:14px"></div>
<div class="lbl" style="left:1018.4px;top:538.16px;">Multiline field</div>
<div class="a" style="left:996px;top:560px;width:194px;height:1px;background:#cbcbcb"></div>
<div class="chk" style="left:996px;top:573px;width:14px;height:14px"></div>
<div class="lbl" style="left:1018.4px;top:574.16px;">Characters limit</div>
<div class="inp" style="left:1145px;top:570px;width:45px;height:21px;background:#f7f7f7"></div>
<div class="lbl" style="left:1157px;top:574.66px;color:#b0b0b0">10</div>
<svg style="left:1177px;top:573px" width="7" height="15" viewBox="0 0 7 15"><path d="M0.5 3.5L3.5 0.5L6.5 3.5 M0.5 11.5L3.5 14.5L6.5 11.5" stroke="#b0b0b0" fill="none"/></svg>
<div class="chk" style="left:996px;top:599px;width:14px;height:14px"></div>
<div class="lbl" style="left:1018.4px;top:599.7px;">Comb of characters</div>
<div class="lbl" style="left:1018.4px;top:623.36px;">Cell width</div>
<div class="inp" style="left:1018px;top:638px;width:81px;height:21px;background:#f7f7f7"></div>
<div class="lbl" style="left:1022px;top:642.66px;color:#b0b0b0">Exactly</div>
<svg style="left:1087px;top:646px" width="7" height="4" viewBox="0 0 7 4"><path d="M0.5 0.5L3.5 3.5L6.5 0.5" stroke="#b0b0b0" fill="none"/></svg>
<div class="inp" style="left:1108px;top:638px;width:82px;height:21px;background:#f7f7f7"></div>
<div class="lbl" style="left:1137px;top:642.66px;color:#b0b0b0">0.3 cm</div>
<svg style="left:1177px;top:641px" width="7" height="15" viewBox="0 0 7 15"><path d="M0.5 3.5L3.5 0.5L6.5 3.5 M0.5 11.5L3.5 14.5L6.5 11.5" stroke="#b0b0b0" fill="none"/></svg>
<div class="a" style="left:996px;top:668px;width:194px;height:1px;background:#cbcbcb"></div>
<div class="inp" style="left:1145px;top:676px;width:45px;height:22px"></div>
<svg style="left:1165px;top:678px" width="14" height="6" viewBox="0 0 14 6"><path d="M0 6L14 0" stroke="#e0302b" stroke-width="1.5"/></svg>
<svg style="left:1215px;top:146px" width="11" height="13" viewBox="0 0 11 13"><path d="M4 0.5C1.5 0.5 0.5 2 0.5 3.5C0.5 5 1.5 6.5 4 6.5Z" fill="#444" stroke="#444"/><path d="M4.5 0.5H10.5 M5 0.5V12.5 M8.5 0.5V12.5" stroke="#444" stroke-width="1.4"/></svg>
<svg style="left:1213px;top:186px" width="16" height="11" viewBox="0 0 16 11"><path fill-rule="evenodd" d="M0 0H16V11H0ZM1 2h4v2h-4zM1 5h4v2h-4zM1 8h4v2h-4zM6 2h4v2h-4zM6 5h4v2h-4zM6 8h4v2h-4zM11 2h4v2h-4zM11 5h4v2h-4zM11 8h4v2h-4z" fill="#a0a0a0"/></svg>
<svg style="left:1214px;top:222px" width="15" height="15" viewBox="0 0 15 15"><path d="M0.5 0.5H14.5V14.5H0.5Z" stroke="#a0a0a0" fill="none"/><circle cx="4.5" cy="4.5" r="1.5" stroke="#a0a0a0" fill="none"/><path d="M0.5 11L5 7L8 9.5L11 6.5L14.5 9.5" stroke="#a0a0a0" fill="none"/></svg>
<svg style="left:1214px;top:259px" width="13" height="17" viewBox="0 0 13 17"><path d="M0.5 0.5H12.5V16.5H0.5Z" stroke="#a0a0a0" fill="none"/><rect x="2" y="2" width="9" height="1.5" fill="#a0a0a0"/><rect x="2" y="13.5" width="9" height="1.5" fill="#a0a0a0"/></svg>
<svg style="left:1213.5px;top:297.5px" width="17" height="16" viewBox="0 0 17 16"><path d="M0.5 11.5V0.5H11.5V4" stroke="#444" fill="none"/><circle cx="10" cy="10" r="5.5" stroke="#444" fill="#f7f7f7"/></svg>
<svg style="left:1213px;top:335px" width="15" height="16" viewBox="0 0 15 16"><path d="M0.5 10.5H3.5V15.5H0.5Z M5.5 6.5H8.5V15.5H5.5Z M10.5 0.5H13.5V15.5H10.5Z" stroke="#a0a0a0" fill="none"/></svg>
<svg style="left:1214px;top:371px" width="17" height="19" viewBox="0 0 17 19"><text x="0" y="12" font-family="Liberation Sans" font-size="13" fill="#a0a0a0">Ta</text><path d="M3 18C5 15 11 15 13 18" stroke="#a0a0a0" fill="none"/></svg>
<svg style="left:1212px;top:414px" width="17" height="12" viewBox="0 0 17 12"><path d="M0.5 0.5H16.5V11.5H0.5Z M0.5 0.5L8.5 7L16.5 0.5 M0.5 11.5L6 5.5 M16.5 11.5L11 5.5" stroke="#a0a0a0" fill="none"/></svg>
<div class="a" style="left:1201px;top:442px;width:39px;height:30px;background:#cbcbcb"></div>
<svg style="left:1213px;top:452px" width="16" height="11" viewBox="0 0 16 11"><path d="M0.6 0.6H15.4V10.4H0.6Z" stroke="#444" stroke-width="1.2" fill="none"/><path d="M2.5 2.5H5.5 M2.5 8.5H5.5 M4 2.5V8.5" stroke="#444" fill="none"/></svg>
<div id="sb" class="a">
<div class="lbl" style="left:41px;top:6px;font-weight:bold">Page 6 of 6</div>
<div class="a" style="left:105px;top:3px;width:1px;height:20px;background:#dfdfdf"></div>
<svg style="left:116px;top:4px" width="13" height="16" viewBox="0 0 13 16"><g stroke="#444" fill="none" stroke-width="1.1"><path d="M0 1.5H12 M0 4.5H12 M0 7.5H8"/><path d="M1.2 10.8L2.5 10V15.2"/><path d="M4.6 11.2C4.8 10.4 5.4 10.1 6.1 10.1C6.9 10.1 7.5 10.6 7.5 11.4C7.5 12.6 4.8 13.6 4.6 15.1H7.8"/><path d="M9 10.2H11.6L10.1 12.1C11 12.1 11.8 12.6 11.8 13.6C11.8 14.6 11.1 15.2 10.2 15.2C9.6 15.2 9.1 14.9 8.9 14.5"/></g></svg>
<div class="lbl" style="left:137px;top:6px;font-weight:bold">Word count</div>
<div class="lbl" style="left:419px;top:6px;font-weight:bold">All changes saved</div>
<div class="a" style="left:743px;top:3px;width:1px;height:20px;background:#dfdfdf"></div>
<div class="lbl" style="left:755px;top:6px;font-weight:bold">English (United States)</div>
<svg style="left:880px;top:10px" width="6" height="4" viewBox="0 0 6 4"><path d="M0.5 0.5L3 3L5.5 0.5" stroke="#444" fill="none"/></svg>
<svg style="left:895px;top:5px" width="15" height="15" viewBox="0 0 15 15"><circle cx="7.5" cy="7.5" r="7" fill="none" stroke="#444"/><ellipse cx="7.5" cy="7.5" rx="3" ry="7" fill="none" stroke="#444"/><path d="M0.5 7.5H14.5 M1.5 4H13.5 M1.5 11H13.5 M7.5 0.5V14.5" stroke="#444" fill="none"/></svg>
<div class="a" style="left:923px;top:2px;width:20px;height:20px;background:#cbcbcb"></div>
<svg style="left:925px;top:6px" width="16" height="13" viewBox="0 0 16 13"><text x="0" y="6.5" font-family="Liberation Sans" font-weight="bold" font-size="7" fill="#444">ABC</text><path d="M6 9L9 12L15 5" stroke="#444" stroke-width="1.5" fill="none"/></svg>
<div class="a" style="left:953px;top:3px;width:1px;height:20px;background:#dfdfdf"></div>
<svg style="left:965px;top:5px" width="16" height="15" viewBox="0 0 16 15"><path d="M10.5 5V0.5H0.5V14.5H10.5V12" fill="none" stroke="#444"/><path d="M2.5 3.5H8.5 M2.5 6H7.5 M2.5 8.5H5.5" stroke="#444"/><path d="M6.5 11.5L7 9.5L13.5 3L15 4.5L8.5 11Z" fill="none" stroke="#444"/></svg>
<svg style="left:985px;top:10px" width="6" height="4" viewBox="0 0 6 4"><path d="M0.5 0.5L3 3L5.5 0.5" stroke="#444" fill="none"/></svg>
<div class="a" style="left:1003px;top:3px;width:1px;height:20px;background:#dfdfdf"></div>
<svg style="left:1016px;top:5px" width="14" height="15" viewBox="0 0 14 15"><path d="M0.5 0.5H13.5V14.5H0.5Z" fill="none" stroke="#444"/><path d="M7 3V12 M2.5 7.5H11.5 M5.5 4.5L7 3L8.5 4.5 M5.5 10.5L7 12L8.5 10.5 M4 6L2.5 7.5L4 9 M10 6L11.5 7.5L10 9" fill="none" stroke="#444" stroke-width="0.8"/></svg>
<svg style="left:1044px;top:7px" width="18" height="11" viewBox="0 0 18 11"><path d="M0.5 0V11 M17.5 0V11 M3 5.5H15 M5 3.5L3 5.5L5 7.5 M13 3.5L15 5.5L13 7.5" fill="none" stroke="#444"/></svg>
<div class="a" style="left:1079px;top:12px;width:10px;height:1px;background:#444"></div>
<div class="lbl" style="left:1106px;top:6px;font-weight:bold">Zoom 100%</div>
<div class="a" style="left:1185px;top:12px;width:11px;height:1px;background:#444"></div>
<div class="a" style="left:1190px;top:7px;width:1px;height:11px;background:#444"></div>
</div>
<div id="mask" class="a"></div><div id="dlg" class="a">
<div class="a" style="left:0;top:0;width:502px;height:34px;background:#f7f7f7;border-bottom:1px solid #cbcbcb"></div>
<div class="a" style="left:0;top:8px;width:502px;text-align:center;font-weight:bold;font-size:12px;line-height:20px;color:#444;will-change:transform">Manage Roles</div>
<svg style="left:480px;top:12px" width="11" height="11" viewBox="0 0 11 11"><path d="M0.5 0.5L10.5 10.5 M10.5 0.5L0.5 10.5" stroke="#444" stroke-width="1"/></svg>
<div class="a" style="left:10px;top:45px;font-size:11px;line-height:13px;color:#444;white-space:nowrap">Add roles and set the order in which the fillers receive and sign the document</div>
<div class="a" style="left:441px;top:41px;width:22px;height:22px;border:1px solid #e4e4e4;background:#fff"></div>
<svg style="left:446px;top:48px" width="12" height="7" viewBox="0 0 12 7"><path d="M0.5 6.5L6 1L11.5 6.5" stroke="#c8c8c8" fill="none"/></svg>
<div class="a" style="left:468px;top:41px;width:22px;height:22px;border:1px solid #cfcfcf;background:#fff"></div>
<svg style="left:473px;top:49px" width="12" height="7" viewBox="0 0 12 7"><path d="M0.5 0.5L6 6L11.5 0.5" stroke="#444" fill="none"/></svg>
<div class="a" style="left:10px;top:71px;width:480px;height:170px;border:1px solid #8a8a8a;border-radius:2px"></div>
<div class="a" style="left:11px;top:72px;width:478px;height:28px;background:#cbcbcb"></div>
<svg style="left:21px;top:80px" width="12" height="40" viewBox="0 0 12 40"><circle cx="5.5" cy="6" r="3.3" fill="none" stroke="#444" stroke-width="1.2"/><circle cx="5.5" cy="34" r="3.3" fill="none" stroke="#444" stroke-width="1.2"/><path d="M5.5 9.5V30.5" stroke="#444" stroke-width="1.2" stroke-dasharray="1.5 1.5"/></svg>
<div class="a" style="left:45px;top:80px;width:14px;text-align:center;font-size:11px;line-height:13px;color:#444">1</div>
<div class="a" style="left:67px;top:80px;width:12px;height:12px;background:#808080;border:1px solid #6a6a6a"></div>
<div class="a" style="left:92px;top:80px;font-size:11px;line-height:13px;color:#444">Form filler</div>
<div class="a" style="left:440px;top:80px;width:43px;text-align:right;font-size:11px;line-height:13px;color:#444">62</div>
<div class="a" style="left:45px;top:108px;width:14px;text-align:center;font-size:11px;line-height:13px;color:#444">2</div>
<div class="a" style="left:67px;top:108px;width:12px;height:12px;background:#ccccff;border:1px solid #b2b2e6"></div>
<div class="a" style="left:92px;top:108px;font-size:11px;line-height:13px;color:#444">Signer</div>
<div class="a" style="left:440px;top:108px;width:43px;text-align:right;font-size:11px;line-height:13px;color:#444">111</div>
<div class="btn" style="left:10px;top:249px;width:100px">New</div>
<div class="btn" style="left:118px;top:249px;width:100px">Edit</div>
<div class="btn" style="left:390px;top:249px;width:100px">Delete</div>
<div class="a" style="left:0;top:302px;width:502px;height:1px;background:#dcdcdc"></div>
<div class="btn" style="left:208px;top:317px;width:86px">Close</div>
</div>

</body></html>
